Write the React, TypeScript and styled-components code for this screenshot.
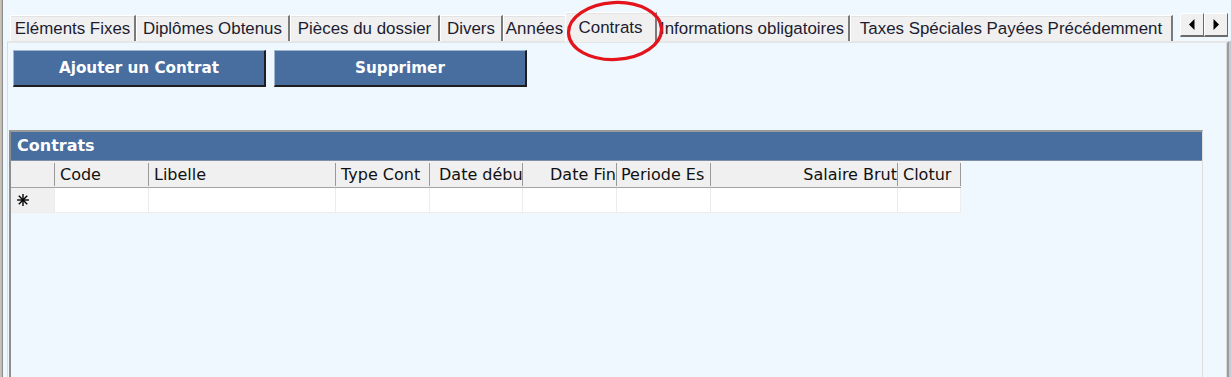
import React from "react";
import styled, { createGlobalStyle } from "styled-components";

const Global = createGlobalStyle`
  html, body { margin: 0; padding: 0; background: #f0f8ff; }
  body { width: 1231px; height: 377px; overflow: hidden; }
`;

const Page = styled.div`
  position: relative;
  display: flex;
  width: 1231px;
  height: 377px;
  overflow: hidden;
  background: #f0f8ff;
`;

const LeftEdge = styled.div`
  width: 3px;
  flex: none;
  background: linear-gradient(to right, #c9c2b8 0 1px, #b9b9b9 1px 2px, #8c8c8c 2px 3px);
`;

const Content = styled.div`
  flex: 1;
  display: flex;
  flex-direction: column;
  min-width: 0;
`;

const TabStrip = styled.div`
  height: 41px;
  display: flex;
  align-items: flex-end;
  padding-left: 7px;
  flex: none;
  position: relative;
  z-index: 2;
`;

const Tab = styled.div<{ $w: number; $active?: boolean }>`
  box-sizing: border-box;
  width: ${(p) => p.$w}px;
  height: ${(p) => (p.$active ? 30 : 26)}px;
  margin-bottom: ${(p) => (p.$active ? -1 : 0)}px;
  margin-left: ${(p) => (p.$active ? -2 : 0)}px;
  margin-right: ${(p) => (p.$active ? -2 : 0)}px;
  background: #f0f0f0;
  border-top: 1px solid #ffffff;
  border-left: 1px solid #ffffff;
  border-right: 2px solid #7a7a7a;
  box-shadow: inset 0 1px 0 #e3e3e3;
  display: flex;
  justify-content: center;
  align-items: ${(p) => (p.$active ? "flex-start" : "center")};
  padding-top: ${(p) => (p.$active ? 5 : 1)}px;
  font-family: "Liberation Sans", Arial, sans-serif;
  font-size: 16.9px;
  color: #1c1c30;
  white-space: nowrap;
  position: relative;
  z-index: ${(p) => (p.$active ? 2 : 1)};
`;

const ScrollBox = styled.div`
  display: flex;
  align-self: flex-start;
  margin-top: 13px;
  margin-left: 7px;
`;

const ScrollButton = styled.div`
  box-sizing: border-box;
  width: 24px;
  height: 24px;
  background: #f0f0f0;
  border-top: 1px solid #ffffff;
  border-left: 1px solid #ffffff;
  border-right: 1px solid #6a6a6a;
  border-bottom: 2px solid #6a6a6a;
  display: flex;
  align-items: center;
  justify-content: center;
`;

const Panel = styled.div`
  flex: 1;
  margin-left: 4px;
  margin-right: 2px;
  border-top: 2px solid #e6e6e6;
  border-left: 1px solid #dcdcdc;
  border-right: 2px solid #9c9c9c;
  box-shadow: inset -1px 0 0 #d9d9d9, 2px 0 0 #c3cad4;
  display: flex;
  flex-direction: column;
  min-height: 0;
`;

const ButtonRow = styled.div`
  display: flex;
  gap: 8px;
  padding-left: 5px;
  margin-top: 7px;
`;

const ActionButton = styled.button`
  box-sizing: border-box;
  width: 253px;
  height: 37px;
  background: #476e9f;
  border: none;
  border-top: 1px solid #9fb6d3;
  border-left: 1px solid #9fb6d3;
  border-right: 2px solid #1e1e22;
  border-bottom: 2px solid #1e1e22;
  color: #ffffff;
  font-family: "DejaVu Sans", Verdana, sans-serif;
  font-weight: bold;
  font-size: 15.2px;
  padding: 0;
  cursor: default;
`;

const Grid = styled.div`
  margin-top: 43px;
  margin-left: 1px;
  width: 1194px;
  flex: 1;
  box-sizing: border-box;
  border-left: 2px solid #8e8e8e;
  border-right: 1px solid #dedede;
  border-top: 2px solid #9a9a9a;
  display: flex;
  flex-direction: column;
`;

const Caption = styled.div`
  height: 27px;
  background: #476e9f;
  border-bottom: 1px solid #7f8fa5;
  color: #ffffff;
  font-family: "DejaVu Sans", Verdana, sans-serif;
  font-weight: bold;
  font-size: 16px;
  display: flex;
  align-items: center;
  padding-left: 6px;
  padding-bottom: 1px;
`;

const Row = styled.div<{ $header?: boolean }>`
  display: flex;
  height: ${(p) => (p.$header ? 26 : 24)}px;
  border-bottom: 1px solid ${(p) => (p.$header ? "#a3a3a3" : "#ececec")};
  align-self: flex-start;
`;

const Cell = styled.div<{ $w: number; $header?: boolean; $right?: boolean; $pl?: number; $gray?: boolean }>`
  box-sizing: border-box;
  width: ${(p) => p.$w}px;
  flex: none;
  position: relative;
  overflow: hidden;
  white-space: nowrap;
  background: ${(p) => (p.$header || p.$gray ? "#f0f0f0" : "#ffffff")};
  font-family: "DejaVu Sans", Verdana, sans-serif;
  font-size: 16px;
  color: #111;
  display: flex;
  align-items: center;
  justify-content: ${(p) => (p.$right ? "flex-end" : "flex-start")};
  padding-left: ${(p) => p.$pl ?? 5}px;
  padding-right: ${(p) => (p.$right ? 1 : 0)}px;
  padding-top: ${(p) => (p.$header ? 1 : 0)}px;
  border-right: ${(p) => (p.$header ? "none" : "1px solid #ececec")};
  &::after {
    content: "";
    display: ${(p) => (p.$header ? "block" : "none")};
    position: absolute;
    right: 0;
    top: 2px;
    bottom: 1px;
    width: 1px;
    background: #9a9a9a;
  }
`;

const Annotation = styled.svg`
  position: absolute;
  left: 560px;
  top: 0;
  pointer-events: none;
  z-index: 5;
`;

const tabs = [
  { label: "Eléments Fixes", w: 126 },
  { label: "Diplômes Obtenus", w: 154 },
  { label: "Pièces du dossier", w: 150 },
  { label: "Divers", w: 63 },
  { label: "Années", w: 64 },
  { label: "Contrats", w: 92, active: true },
  { label: "Informations obligatoires", w: 195 },
  { label: "Taxes Spéciales Payées Précédemment", w: 323 },
];

const columns = [
  { label: "", w: 44 },
  { label: "Code", w: 94 },
  { label: "Libelle", w: 187 },
  { label: "Type Cont", w: 94 },
  { label: "Date débu", w: 93, pl: 9 },
  { label: "Date Fin", w: 94, right: true },
  { label: "Periode Es", w: 94, pl: 4 },
  { label: "Salaire Brut", w: 187, right: true },
  { label: "Clotur", w: 63 },
];

const NewRowStar = () => (
  <svg width="12" height="12" viewBox="0 0 12 12">
    <g stroke="#000" strokeWidth="1.4" strokeLinecap="square">
      <line x1="6" y1="0.8" x2="6" y2="11.2" />
      <line x1="0.8" y1="6" x2="11.2" y2="6" />
      <line x1="2.3" y1="2.3" x2="9.7" y2="9.7" />
      <line x1="9.7" y1="2.3" x2="2.3" y2="9.7" />
    </g>
  </svg>
);

const Arrow = ({ dir }: { dir: "left" | "right" }) => (
  <svg width="8" height="13" viewBox="0 0 8 13">
    {dir === "left" ? <polygon points="6.5,1 6.5,12 1,6.5" fill="#000" /> : <polygon points="1.5,1 1.5,12 7,6.5" fill="#000" />}
  </svg>
);

export default function App() {
  return (
    <Page>
      <Global />
      <LeftEdge />
      <Content>
        <TabStrip>
          {tabs.map((t) => (
            <Tab key={t.label} $w={t.w} $active={t.active}>
              {t.label}
            </Tab>
          ))}
          <ScrollBox>
            <ScrollButton>
              <Arrow dir="left" />
            </ScrollButton>
            <ScrollButton>
              <Arrow dir="right" />
            </ScrollButton>
          </ScrollBox>
        </TabStrip>
        <Panel>
          <ButtonRow>
            <ActionButton>Ajouter un Contrat</ActionButton>
            <ActionButton>Supprimer</ActionButton>
          </ButtonRow>
          <Grid>
            <Caption>Contrats</Caption>
            <Row $header>
              {columns.map((c, i) => (
                <Cell key={i} $w={c.w} $header $right={c.right} $pl={c.pl}>
                  {c.label}
                </Cell>
              ))}
            </Row>
            <Row>
              {columns.map((c, i) => (
                <Cell key={i} $w={c.w} $gray={i === 0} $pl={i === 0 ? 6 : 5}>
                  {i === 0 ? <NewRowStar /> : null}
                </Cell>
              ))}
            </Row>
          </Grid>
        </Panel>
      </Content>
      <Annotation width="110" height="64" viewBox="0 0 110 64">
        <ellipse cx="55" cy="31" rx="46.5" ry="28.5" fill="none" stroke="#e3141c" strokeWidth="3.2" transform="rotate(-3 55 31)" />
      </Annotation>
    </Page>
  );
}
